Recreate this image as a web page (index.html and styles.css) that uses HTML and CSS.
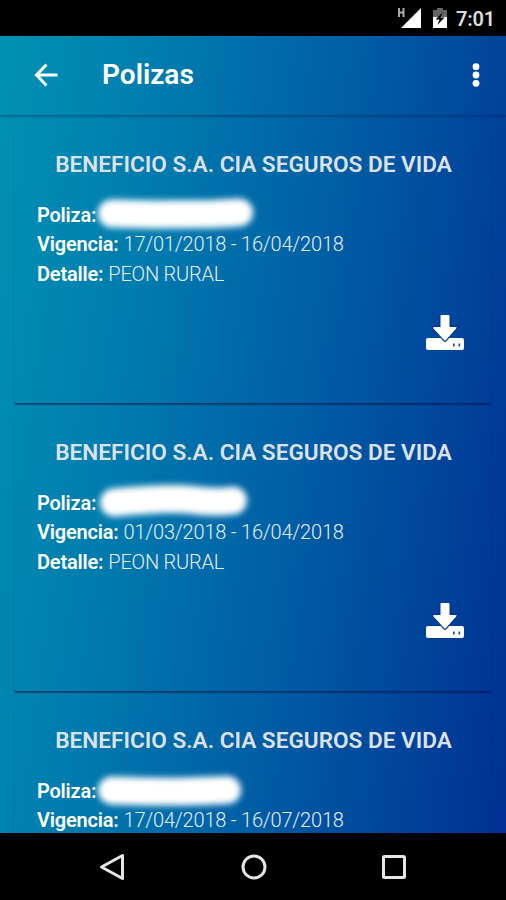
FILE: index.html
```html
<!DOCTYPE html>
<html lang="es">
<head>
    <meta charset="UTF-8">
    <meta name="viewport" content="width=device-width, initial-scale=1.0">
    <title>Polizas</title>
    <link rel="stylesheet" href="styles.css">
</head>
<body>
    <div class="status-bar">
        <svg class="signal" width="25" height="22" viewBox="0 0 25 22">
            <path d="M2 1v9M6.500 1v9M2 5.500h4.500" stroke="#aaa" stroke-width="2" fill="none"/>
            <path d="M24 1v20H4z" fill="#fff"/>
        </svg>
        <svg class="battery" width="14" height="20" viewBox="0 0 14 20">
            <path d="M4 0h6v2h4v8H0V2h4z" fill="#666"/>
            <path d="M0 9h14v11H0z" fill="#fff"/>
            <path d="M10 4L2.500 11.500h4L4.500 17l7-7.500h-4z" fill="#000"/>
        </svg>
        <span class="clock">7:01</span>
    </div>

    <div class="app">
        <header class="toolbar">
            <svg class="back" width="24" height="24" viewBox="0 0 24 24" fill="none" stroke="#fff" stroke-width="3">
                <path d="M12.500 1.500L2.500 12l10 10.500M2.500 12h21"/>
            </svg>
            <h1>Polizas</h1>
            <svg class="more" width="8" height="24" viewBox="0 0 8 24" fill="#fff">
                <circle cx="4" cy="3.700" r="3.400"/>
                <circle cx="4" cy="12" r="3.400"/>
                <circle cx="4" cy="20.300" r="3.400"/>
            </svg>
        </header>

        <main class="list">
            <section class="card">
                <h2>BENEFICIO S.A. CIA SEGUROS DE VIDA</h2>
                <p><b>Poliza:</b><svg class="hidden-number" width="170" height="42" viewBox="0 0 170 42">
                    <path d="M19 19.500L60 20.500L120 20L146 18.500"/>
                </svg></p>
                <p><b>Vigencia:</b> <span>17/01/2018 - 16/04/2018</span></p>
                <p><b>Detalle:</b> <span>PEON RURAL</span></p>
                <svg class="download" width="38" height="36" viewBox="0 0 38 36">
                    <path class="drive" d="M2 23h34q2 0 2 2v8q0 2-2 2H2q-2 0-2-2v-8q0-2 2-2z"/>
                    <path class="arrow" d="M14.500 1q0-1 1-1h7q1 0 1 1v11h6q2 0 .7 1.500L20 25q-1 1-2 0L7.500 13.500q-1.300-1.500.7-1.500h6.300z"/>
                    <path class="leds" d="M27 28.500h1.700v3H27zM32.500 28.500h1.700v3h-1.700z"/>
                </svg>
            </section>

            <section class="card">
                <h2>BENEFICIO S.A. CIA SEGUROS DE VIDA</h2>
                <p><b>Poliza:</b><svg class="hidden-number" width="170" height="42" viewBox="0 0 170 42">
                    <path d="M21 20.500Q75 15 100 18T140 18.500"/>
                </svg></p>
                <p><b>Vigencia:</b> <span>01/03/2018 - 16/04/2018</span></p>
                <p><b>Detalle:</b> <span>PEON RURAL</span></p>
                <svg class="download" width="38" height="36" viewBox="0 0 38 36">
                    <path class="drive" d="M2 23h34q2 0 2 2v8q0 2-2 2H2q-2 0-2-2v-8q0-2 2-2z"/>
                    <path class="arrow" d="M14.500 1q0-1 1-1h7q1 0 1 1v11h6q2 0 .7 1.500L20 25q-1 1-2 0L7.500 13.500q-1.300-1.500.7-1.500h6.300z"/>
                    <path class="leds" d="M27 28.500h1.700v3H27zM32.500 28.500h1.700v3h-1.700z"/>
                </svg>
            </section>

            <section class="card">
                <h2>BENEFICIO S.A. CIA SEGUROS DE VIDA</h2>
                <p><b>Poliza:</b><svg class="hidden-number" width="170" height="42" viewBox="0 0 170 42">
                    <path d="M19 20.500Q70 22 90 21.500T134 20"/>
                </svg></p>
                <p><b>Vigencia:</b> <span>17/04/2018 - 16/07/2018</span></p>
            </section>
        </main>
    </div>

    <nav class="nav-bar">
        <svg width="28" height="28" viewBox="0 0 28 28"><path d="M23.500 2.500v23L2.500 14z"/></svg>
        <svg width="28" height="28" viewBox="0 0 28 28"><circle cx="14" cy="14" r="11"/></svg>
        <svg width="28" height="28" viewBox="0 0 28 28"><rect x="3.500" y="3.500" width="21" height="21" rx="1"/></svg>
    </nav>
</body>
</html>
```

FILE: styles.css
```css
* {
    box-sizing: border-box;
}
body {
    margin: 0;
    height: 900px;
    display: flex;
    flex-direction: column;
    overflow: hidden;
    background: #000;
    color: #fff;
    font-family: Roboto, sans-serif;
}
svg {
    display: block;
    flex: none;
}
.status-bar {
    height: 36px;
    flex: none;
    display: flex;
    align-items: center;
    justify-content: flex-end;
    padding-right: 11px;
}
.signal {
    margin-right: 11px;
}
.battery {
    margin-right: 9px;
}
.clock {
    font-size: 20px;
    font-weight: 600;
    letter-spacing: -0.2px;
    color: #ddd;
    line-height: 36px;
    padding-top: 2px;
}
.app {
    height: 797px;
    flex: none;
    overflow: hidden;
    background: linear-gradient(98deg, #0092b3 0%, #007bae 28%, #005fa5 57%, #003093 100%);
}
.toolbar {
    height: 79px;
    display: flex;
    align-items: center;
    padding: 0 26px 1px 34px;
    box-shadow: 0 1px 3px rgba(0, 20, 60, 0.5);
}
.toolbar h1 {
    margin: 0 auto 0 44px;
    font-size: 28px;
    font-weight: 600;
    line-height: 32px;
}
.list {
    padding: 16px 14px;
    display: flex;
    flex-direction: column;
    gap: 16px;
}
.card {
    height: 272px;
    flex: none;
    padding: 17px 23px 16px;
    border-radius: 3px;
    box-shadow: 0 2px 2px -1px rgba(0, 20, 60, 0.6), 0 3px 2px -1px rgba(0, 20, 60, 0.15), 0 2px 1px rgba(0, 20, 60, 0.12);
}
.card h2 {
    margin: 0 0 18px;
    padding-left: 1px;
    font-size: 22.6px;
    font-weight: 600;
    line-height: 34px;
    text-align: center;
    white-space: nowrap;
    color: #dfe1ea;
}
.card p {
    display: flex;
    align-items: center;
    gap: 5px;
    height: 29.500px;
    margin: 0;
    font-size: 20px;
    white-space: nowrap;
}
.card b {
    font-weight: 600;
    letter-spacing: -0.2px;
}
.card span {
    font-weight: 350;
    letter-spacing: -0.2px;
    color: #e8eefc;
}
.hidden-number {
    margin: -6px 0 -6px -8px;
    fill: none;
    stroke: #fff;
    stroke-width: 28px;
    stroke-linecap: round;
    filter: blur(3px);
}
.download {
    margin: 26px 5px 0 auto;
}
.drive {
    fill: #fff;
}
.arrow {
    fill: #fff;
    stroke: #00369a;
    stroke-width: 2.5px;
    paint-order: stroke;
}
.leds {
    fill: #234b9c;
}
.nav-bar {
    flex: 1;
    display: flex;
    align-items: center;
    justify-content: center;
    gap: 112.500px;
    padding-left: 1px;
}
.nav-bar svg {
    fill: none;
    stroke: #e6e6e6;
    stroke-width: 3px;
    stroke-linejoin: round;
}
```
